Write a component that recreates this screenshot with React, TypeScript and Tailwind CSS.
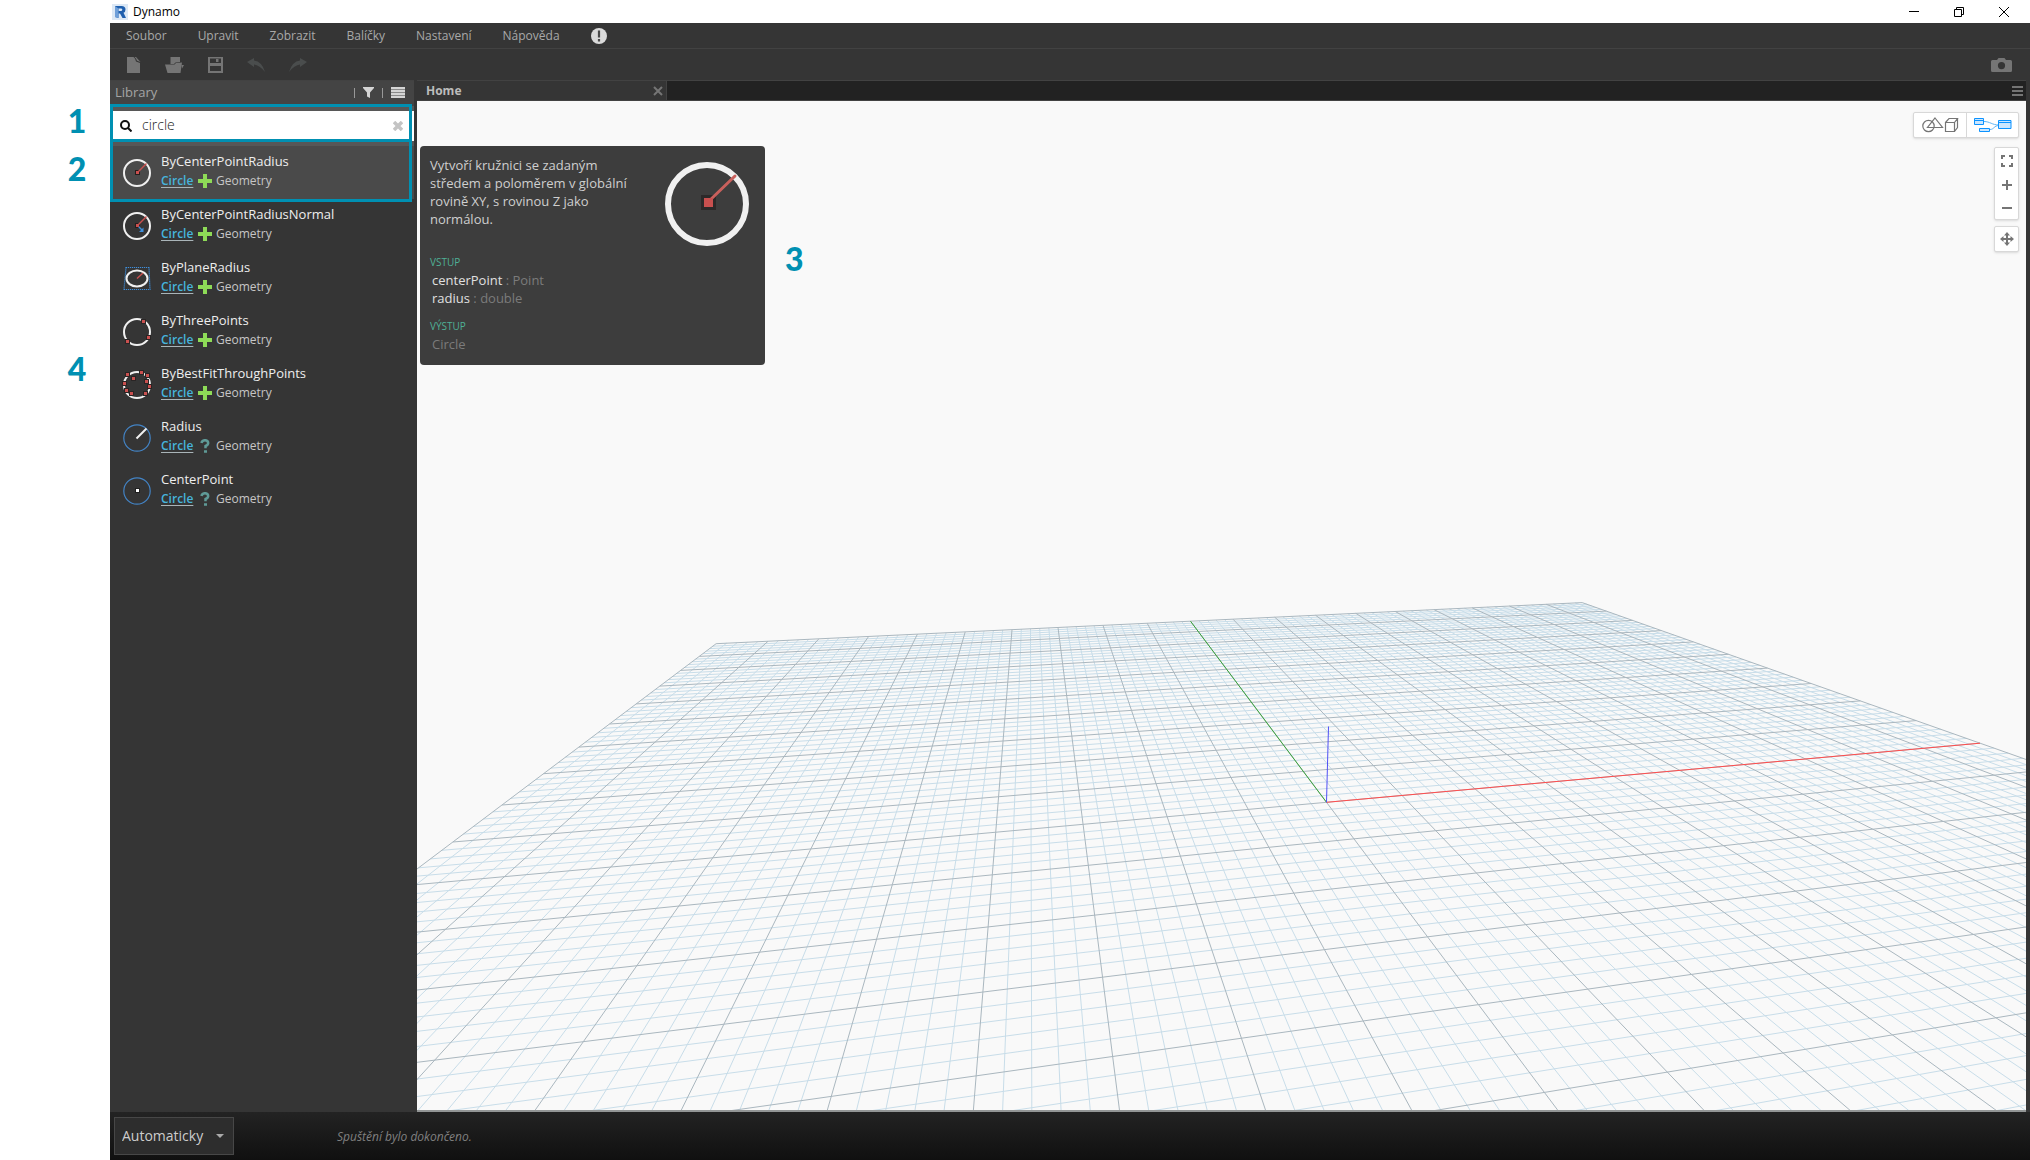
import { useState } from "react";
import type { ReactNode } from "react";

const menus = ["Soubor", "Upravit", "Zobrazit", "Balíčky", "Nastavení", "Nápověda"];

type NodeIcon = "radius" | "normal" | "plane" | "three" | "fit" | "getRadius" | "getCenter";

const results: { name: string; icon: NodeIcon; action: "create" | "query" }[] = [
  { name: "ByCenterPointRadius", icon: "radius", action: "create" },
  { name: "ByCenterPointRadiusNormal", icon: "normal", action: "create" },
  { name: "ByPlaneRadius", icon: "plane", action: "create" },
  { name: "ByThreePoints", icon: "three", action: "create" },
  { name: "ByBestFitThroughPoints", icon: "fit", action: "create" },
  { name: "Radius", icon: "getRadius", action: "query" },
  { name: "CenterPoint", icon: "getCenter", action: "query" },
];

const inputs = [
  { name: "centerPoint", type: "Point" },
  { name: "radius", type: "double" },
];

const Dots = ({ points }: { points: number[][] }) => (
  <>
    {points.map(([x, y]) => (
      <g key={`${x}-${y}`}>
        <rect x={x - 2.5} y={y - 2.5} width="5" height="5" fill="#2a2525" />
        <rect x={x - 1.5} y={y - 1.5} width="3" height="3" fill="#c9504f" />
      </g>
    ))}
  </>
);

const Ring = () => <circle cx="14" cy="14" r="13" fill="none" stroke="#f0f0f0" strokeWidth="2" />;
const BlueRing = () => <circle cx="14" cy="14" r="13.2" fill="none" stroke="#4383c4" strokeWidth="1.2" />;

const glyphs: Record<NodeIcon, ReactNode> = {
  radius: (
    <>
      <Ring />
      <rect x="12" y="11" width="5" height="5" fill="#241f1f" />
      <path d="M15 13l8.500-8.500" stroke="#c9504f" strokeWidth="1.400" />
      <rect x="13" y="12" width="3" height="3" fill="#c9504f" />
    </>
  ),
  normal: (
    <>
      <Ring />
      <rect x="12" y="11" width="5" height="5" fill="#241f1f" />
      <path d="M15 13l8.500-8.500" stroke="#c9504f" strokeWidth="1.400" />
      <path d="M15 14l4 4" stroke="#3f8fdc" strokeWidth="1.500" />
      <path d="M20.5 15.500v4.500H16z" fill="#3f8fdc" />
      <rect x="13" y="12" width="3" height="3" fill="#c9504f" />
    </>
  ),
  plane: (
    <>
      <path d="M3 2.500h23l1 22H1z" fill="none" stroke="#3f8fdc" strokeWidth="1.200" strokeDasharray="1.200 0.800" />
      <ellipse cx="14" cy="13.500" rx="10.500" ry="8" fill="none" stroke="#f0f0f0" strokeWidth="2" />
      <path d="M14 13.500l6-5.500" stroke="#c9504f" strokeWidth="1.400" />
    </>
  ),
  three: (
    <>
      <Ring />
      <Dots points={[[20.5, 3.5], [25.5, 19.5], [4.5, 23.5]]} />
    </>
  ),
  fit: (
    <>
      <Ring />
      <Dots
        points={[
          [4.5, 3.5], [18.5, 1.5], [24.5, 4.5], [10.5, 7.5], [23.5, 10.5],
          [1.5, 12.5], [26.5, 15.5], [3.5, 19.5], [8.5, 22.5], [22.5, 22.5],
        ]}
      />
    </>
  ),
  getRadius: (
    <>
      <BlueRing />
      <path d="M13.500 14.500l10-10" stroke="#f0f0f0" strokeWidth="2" />
    </>
  ),
  getCenter: (
    <>
      <BlueRing />
      <rect x="12" y="11" width="5" height="5" fill="#1f1f1f" />
      <rect x="13" y="12" width="3" height="3" fill="#fff" />
    </>
  ),
};

// Ground plane, 20 x 20 major cells; x and y run from -1 to 1
const G = 0.17615;
const H = 0.847;
const project = (x: number, y: number) => {
  const w = G * x + H * y + 1;
  return [
    (G * 5690 * x + H * 1029.9 * y + 1326.5) / w,
    (G * 407.4 * x + H * 407.4 * y + 802.3) / w,
  ];
};

// Lines stop where they would pass behind the camera
const NEAR = 0.25;
const steps = Array.from({ length: 101 }, (_, i) => i - 50);

const gridPath = (list: number[]) =>
  list
    .map((i) => {
      const t = i / 50;
      const yMin = Math.max(-1, (NEAR - 1 - G * t) / H);
      const xMin = Math.max(-1, (NEAR - 1 - H * t) / G);
      const lines = [[project(t, yMin), project(t, 1)]];
      if (xMin < 1) lines.push([project(xMin, t), project(1, t)]);
      return lines
        .map(([a, b]) => `M${a[0].toFixed(1)} ${a[1].toFixed(1)}L${b[0].toFixed(1)} ${b[1].toFixed(1)}`)
        .join("");
    })
    .join("");

const minorLines = gridPath(steps.filter((i) => i % 5 !== 0));
const majorLines = gridPath(steps.filter((i) => i % 5 === 0));

const GroundGrid = () => (
  <svg
    className="absolute inset-0 h-full w-full"
    viewBox="417 101 1609 1009"
    preserveAspectRatio="xMinYMin slice"
    fill="none"
    aria-hidden="true"
  >
    <path d={minorLines} stroke="#c8dde9" strokeWidth="1" />
    <path d={majorLines} stroke="#aab7bf" strokeWidth="1" />
    <path d="M1326.500 802.300L1980 743.200" stroke="#ff4d4d" strokeWidth="1" />
    <path d="M1326.500 802.300L1190.500 621.200" stroke="#3aa33a" strokeWidth="1" />
    <path d="M1326.500 802.300L1328.500 726.500" stroke="#5050f5" strokeWidth="1" />
  </svg>
);

const TitleBar = () => (
  <header className="flex h-[23px] items-center bg-white pr-[3px] pl-[2px]">
    <svg className="h-4 w-4" viewBox="0 0 16 16" aria-hidden="true">
      <rect width="16" height="16" fill="#dce8f5" />
      <path d="M3 2h6.500q4 0 4 3.500 0 2.500-2 3.300L14 14h-3.500L8 9.500H6.500V14L3 13z" fill="#1f5fae" />
      <path d="M6.500 4.500h2.300q1.500 0 1.500 1.200T8.800 7H6.500z" fill="#dce8f5" />
      <path d="M3 2l3.500 2.500V14L3 13z" fill="#6f9fd8" />
    </svg>
    <h1 className="ml-[5px] text-xs text-black">Dynamo</h1>
    <div className="ml-auto flex items-center text-black">
      <button aria-label="Minimalizovat" className="flex w-[45px] justify-center">
        <svg width="12" height="12" viewBox="0 0 12 12" stroke="currentColor"><path d="M1 5.500h10" /></svg>
      </button>
      <button aria-label="Obnovit" className="flex w-[45px] justify-center">
        <svg width="12" height="12" viewBox="0 0 12 12" fill="none" stroke="currentColor">
          <path d="M1.500 3.500h7v7h-7zM3.500 3V1.500h7v7H9" />
        </svg>
      </button>
      <button aria-label="Zavřít" className="flex w-[46px] justify-center">
        <svg width="12" height="12" viewBox="0 0 12 12" stroke="currentColor"><path d="M1 1l10 10M11 1L1 11" /></svg>
      </button>
    </div>
  </header>
);

const MenuBar = () => (
  <nav className="flex h-[26px] items-center gap-[31px] border-b border-[#424242] pl-4 text-xs text-[#a9a9a9]">
    {menus.map((m) => (
      <button key={m}>{m}</button>
    ))}
    <button aria-label="Oznámení">
      <svg width="16" height="16" viewBox="0 0 16 16">
        <circle cx="8" cy="8" r="8" fill="#dadada" />
        <path d="M8 2.500v7M8 11v2.500" stroke="#4a4a4a" strokeWidth="2.200" />
      </svg>
    </button>
  </nav>
);

const Toolbar = () => (
  <div className="flex h-[31px] items-center gap-6 pr-[18px] pl-[17px] text-[#757575]">
    <button aria-label="Nový">
      <svg width="14" height="16" viewBox="0 0 14 16" fill="currentColor">
        <path d="M0 0h6.500q2 1 2.500 4.500l4 1.500V16H0z" />
        <path d="M7.500 0H9l4.500 5-3.500-1.200Q9.500 1.500 7.500 0z" />
      </svg>
    </button>
    <button aria-label="Otevřít">
      <svg width="19" height="16" viewBox="0 0 19 16" fill="currentColor">
        <path d="M5.500 0H15v5l-4.500.5L9 7H5.500z" />
        <path d="M0 7.500h9.500L11 6l6-.500L15.500 16H2.500z" />
        <path d="M16.500 8H19l-2 3.500z" />
      </svg>
    </button>
    <button aria-label="Uložit">
      <svg width="15" height="16" viewBox="0 0 15 16" fill="currentColor">
        <path fillRule="evenodd" d="M0 0h15v16H0zM2 1.500V6h11V1.500zM2 9v5h11V9z" />
        <path d="M8 2h2.500v3H8z" />
      </svg>
    </button>
    <button aria-label="Zpět" className="text-[#4a4d4d]">
      <svg width="18" height="14" viewBox="0 0 18 14" fill="currentColor">
        <path d="M0 4l7-4v2.500q8 1 11 11.500Q12.500 7 7 6.500V9z" />
      </svg>
    </button>
    <button aria-label="Znovu" className="text-[#4a4d4d]">
      <svg width="18" height="14" viewBox="0 0 18 14" fill="currentColor">
        <path d="M18 4l-7-4v2.500Q3 3.500 0 14 5.500 7 11 6.500V9z" />
      </svg>
    </button>
    <button aria-label="Exportovat obrázek" className="ml-auto">
      <svg width="21" height="14" viewBox="0 0 21 14" fill="currentColor">
        <path fillRule="evenodd" d="M1.500 2H6l1.500-2h6L15 2h4.500q1.500 0 1.500 1.500v9q0 1.500-1.500 1.500h-18Q0 14 0 12.500v-9Q0 2 1.500 2zM10.500 4a3.600 3.600 0 100 7.200 3.600 3.600 0 000-7.200z" />
      </svg>
    </button>
  </div>
);

const LibraryPanel = () => {
  const [query, setQuery] = useState("circle");

  return (
    <aside className="flex w-[307px] shrink-0 flex-col bg-[#353535] pr-[3px]">
      <div className="flex h-[26px] items-center border-t border-[#424242] bg-[#444] pr-[9px] pb-[2px] pl-[5px] text-[#a5a5a5]">
        <h2 className="text-[13px]">Library</h2>
        <div className="ml-auto flex items-center gap-2">
          <span className="h-[10px] w-px bg-[#999]" />
          <button aria-label="Filtr">
            <svg width="11" height="11" viewBox="0 0 11 11" fill="#d5d5d5"><path d="M0 0h11v1L7 5.500V11L4 9.500v-4L0 1z" /></svg>
          </button>
          <span className="h-[10px] w-px bg-[#999]" />
          <button aria-label="Zobrazení seznamu">
            <svg width="14" height="11" viewBox="0 0 14 11" fill="#d5d5d5">
              <path d="M0 0h14v11H0z" fill="#8a8a8a" />
              <path d="M0 0h14v2H0zM0 3h14v2H0zM0 6h14v2H0zM0 9h14v2H0z" />
            </svg>
          </button>
        </div>
      </div>

      <div className="relative bg-[#575757] py-[5px]">
        <div className="flex h-[30px] items-center bg-white pr-[11px] pl-[10px]">
          <svg width="12" height="12" viewBox="0 0 12 12" fill="none" stroke="#111" strokeWidth="2">
            <circle cx="5" cy="5" r="4" />
            <path d="M8 8l3.500 3.500" />
          </svg>
          <input
            aria-label="Hledat"
            value={query}
            onChange={(e) => setQuery(e.target.value)}
            className="ml-[10px] min-w-0 flex-1 pb-[2px] text-sm font-light text-[#222] outline-none"
          />
          <button aria-label="Vymazat" onClick={() => setQuery("")}>
            <svg width="10" height="10" viewBox="0 0 10 10" stroke="#c4c4c4" strokeWidth="3.500"><path d="M1 1l8 8M9 1L1 9" /></svg>
          </button>
        </div>
        <div className="pointer-events-none absolute top-[-2px] right-[2px] left-0 h-[38px] border-3 border-[#0090b2]" />
      </div>

      <div className="relative">
        <ul>
          {results.map((r, i) => (
            <li
              key={r.name}
              className={`flex h-[53px] items-center pl-[13px] text-[#eee] ${i === 0 ? "bg-[#4a4a4a]" : ""}`}
            >
              <svg className="shrink-0" width="28" height="28" viewBox="0 0 28 28" overflow="visible">{glyphs[r.icon]}</svg>
              <div className="-mt-[2px] ml-[10px]">
                <p className="text-[13px] leading-[18px] font-medium">{r.name}</p>
                <p className="flex items-center text-xs leading-[22px] text-[#c6c6c6]">
                  <a
                    href="#circle"
                    className="w-8 font-semibold text-[#46b4dc] underline decoration-[#a9b4b8] underline-offset-2"
                  >
                    Circle
                  </a>
                  <svg className="mr-1 ml-[5px]" width="14" height="14" viewBox="0 0 14 14">
                    {r.action === "create" ? (
                      <path d="M5 0h4v5h5v4H9v5H5V9H0V5h5z" fill="#8edb57" />
                    ) : (
                      <path
                        d="M3.500 4Q4 1.200 7 1.200t3.200 2.800Q10.200 6 7.500 7v2.200M6 12.500h3"
                        fill="none"
                        stroke="#5f9a97"
                        strokeWidth="2.500"
                      />
                    )}
                  </svg>
                  Geometry
                </p>
              </div>
            </li>
          ))}
        </ul>
        <div className="pointer-events-none absolute -top-[7px] right-[2px] left-0 h-[63px] border-3 border-[#0090b2]" />
      </div>
    </aside>
  );
};

const NodeTooltip = () => (
  <div className="absolute top-[45px] left-[3px] h-[219px] w-[345px] rounded bg-[#3d3d3d] py-[10px] pr-4 pl-[10px] text-[13px] leading-[18px]">
    <div className="flex h-[92px] items-start justify-between text-[#cfcfcf]">
      <p className="w-[208px]">
        Vytvoří kružnici se zadaným středem a poloměrem v globální rovině XY, s rovinou Z jako normálou.
      </p>
      <svg className="mt-[6px]" width="84" height="84" viewBox="0 0 84 84">
        <circle cx="42" cy="42" r="39" fill="none" stroke="#f0f0f0" strokeWidth="6" />
        <rect x="36" y="33" width="15" height="15" fill="#2c2929" />
        <path d="M43 40L70 14" stroke="#c9605c" strokeWidth="3" strokeLinecap="round" />
        <rect x="39" y="36" width="9" height="9" fill="#c9504f" />
      </svg>
    </div>
    <h3 className="mt-[5px] text-[10px] text-[#4fb096]">VSTUP</h3>
    <ul className="pl-[2px]">
      {inputs.map((p) => (
        <li key={p.name} className="text-[#7b7b7b]">
          <span className="text-[#e0e0e0]">{p.name}</span> : {p.type}
        </li>
      ))}
    </ul>
    <h3 className="mt-[10px] text-[10px] text-[#4fb096]">VÝSTUP</h3>
    <p className="pl-[2px] text-[#7b7b7b]">Circle</p>
  </div>
);

const ViewControls = () => (
  <div className="absolute top-[11px] right-[7px] flex flex-col items-end text-[#757575]">
    <div className="flex h-[26px] rounded-xs border border-[#d8d8d8] bg-white shadow-sm">
      <button aria-label="Náhled geometrie" className="flex w-[53px] items-center justify-center border-r border-[#d8d8d8]">
        <svg width="38" height="16" viewBox="0 0 38 16" fill="none" stroke="currentColor" strokeWidth="1.200">
          <circle cx="7.500" cy="9" r="5.700" />
          <path d="M14 1L21.500 10.500H6.500zM24.500 5.500h9v9h-9zM24.500 5.500l3.500-4h8.500l-3 4M36.500 1.500v9l-3 4" />
        </svg>
      </button>
      <button aria-label="Zobrazení grafu" className="flex w-[51px] items-center justify-center">
        <svg width="38" height="16" viewBox="0 0 38 16" fill="#cbe6ff" stroke="#0c93ff">
          <path d="M10 4.500c6 0 8 3.500 15 3.500M16 12.500c4 0 4-4 9-4" fill="none" stroke="#5fb5f5" />
          <path d="M.5 1.500h9v6h-9zM.5 3.500h9M5.500 11.500h10v3h-10z" />
          <path d="M24.500 3.500h12.500v8H24.500zM24.500 5.500H37" />
        </svg>
      </button>
    </div>
    <div className="mt-[9px] flex w-[25px] flex-col items-center rounded-xs border border-[#d8d8d8] bg-white shadow-sm">
      <button aria-label="Přizpůsobit" className="flex h-[25px] items-center">
        <svg width="12" height="12" viewBox="0 0 12 12" fill="none" stroke="currentColor" strokeWidth="2">
          <path d="M1 4V1h3M8 1h3v3M11 8v3H8M4 11H1V8" />
        </svg>
      </button>
      <button aria-label="Přiblížit" className="flex h-[23px] items-center">
        <svg width="10" height="10" viewBox="0 0 10 10" stroke="currentColor" strokeWidth="2"><path d="M5 0v10M0 5h10" /></svg>
      </button>
      <button aria-label="Oddálit" className="flex h-[23px] items-center">
        <svg width="10" height="10" viewBox="0 0 10 10" stroke="currentColor" strokeWidth="2"><path d="M0 5h10" /></svg>
      </button>
    </div>
    <button
      aria-label="Posun"
      className="mt-[6px] flex h-[26px] w-[25px] items-center justify-center rounded-xs border border-[#d8d8d8] bg-white shadow-sm"
    >
      <svg width="14" height="14" viewBox="0 0 14 14" fill="currentColor">
        <path d="M6 2h2v4h4v2H8v4H6V8H2V6h4z" />
        <path d="M7 0l3 3.500H4zM7 14l3-3.500H4zM0 7l3.500-3v6zM14 7l-3.500-3v6z" />
      </svg>
    </button>
  </div>
);

const Workspace = () => (
  <main className="flex min-w-0 flex-1 flex-col pr-1">
    <div className="flex h-[21px] border-y border-[#424242] bg-[#222]">
      <div className="flex w-[250px] items-center justify-between border-r border-[#424242] bg-[#353535] pr-[3px] pl-[9px]">
        <h2 className="text-xs font-bold text-[#bcbcbc]">Home</h2>
        <button aria-label="Zavřít kartu">
          <svg width="10" height="10" viewBox="0 0 10 10" stroke="#757575" strokeWidth="2"><path d="M1 1l8 8M9 1L1 9" /></svg>
        </button>
      </div>
      <button aria-label="Seznam karet" className="mr-[3px] ml-auto">
        <svg width="11" height="10" viewBox="0 0 11 10" fill="#757575"><path d="M0 0h11v2H0zM0 4h11v2H0zM0 8h11v2H0z" /></svg>
      </button>
    </div>
    <div className="relative flex-1 overflow-hidden border-b-2 border-[#939696] bg-[#f9f9f9]">
      <GroundGrid />
      <NodeTooltip />
      <span className="absolute top-[142px] left-[368px] font-['Lato'] text-[32px] leading-8 font-black text-[#0090b2]">3</span>
      <ViewControls />
    </div>
  </main>
);

const StatusBar = () => (
  <footer className="flex h-12 items-center bg-gradient-to-b from-[#232323] to-[#101010] pl-1">
    <div className="relative">
      <select
        aria-label="Režim spuštění"
        className="h-[38px] w-[120px] appearance-none border border-[#474747] bg-[#2d2d2d] pl-[7px] text-sm text-[#ccc] outline-none"
      >
        <option>Automaticky</option>
        <option>Ručně</option>
      </select>
      <svg className="pointer-events-none absolute top-[17px] right-[10px]" width="8" height="4" viewBox="0 0 8 4" fill="#aaa">
        <path d="M0 0h8L4 4z" />
      </svg>
    </div>
    <p className="ml-[103px] pt-[2px] text-xs text-[#808080] italic">Spuštění bylo dokončeno.</p>
  </footer>
);

const App = () => {
  return (
    <div className="flex min-h-screen bg-white font-['Open_Sans',sans-serif]">
      <div className="flex w-[110px] shrink-0 flex-col pt-[105px] pl-11 text-center font-['Lato'] text-[32px] leading-8 font-black text-[#0090b2]">
        <span>1</span>
        <span className="mt-4">2</span>
        <span className="mt-[168px]">4</span>
      </div>
      <div className="flex min-w-0 flex-1 flex-col">
        <TitleBar />
        <div className="flex flex-1 flex-col bg-[#353535]">
          <MenuBar />
          <Toolbar />
          <div className="flex flex-1">
            <LibraryPanel />
            <Workspace />
          </div>
          <StatusBar />
        </div>
      </div>
    </div>
  );
};

export default App;
